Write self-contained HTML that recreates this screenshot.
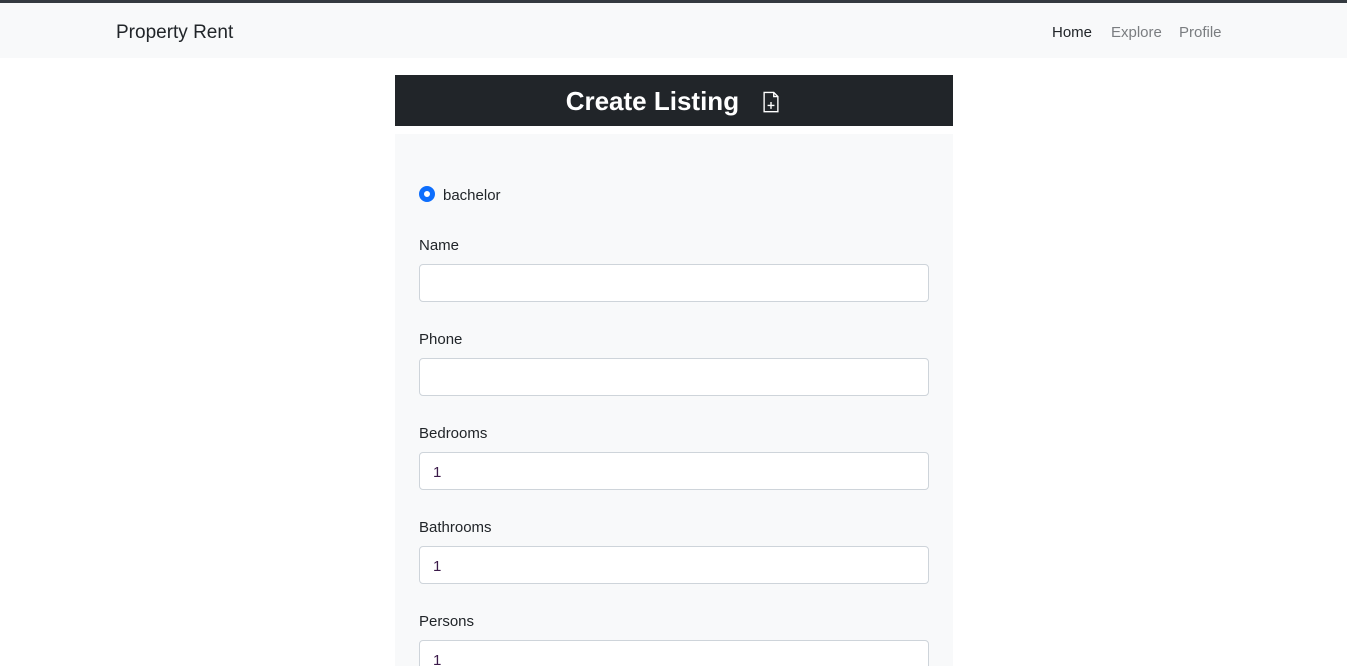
<!DOCTYPE html>
<html style="width:1347px;height:666px;overflow:hidden"><head><style>
*{box-sizing:border-box;margin:0;padding:0}
body{width:1347px;height:666px;overflow:hidden;background:#fff;font-family:"Liberation Sans",sans-serif;color:#212529;position:relative}
.top{position:absolute;left:0;top:0;width:1347px;height:3px;background:#343a40}
.nav{position:absolute;left:0;top:3px;width:1347px;height:55px;background:#f8f9fa}
.brand{position:absolute;left:116px;top:19px;font-size:19px;color:#212529}
.links{position:absolute;top:21px;font-size:15px}
.head{position:absolute;left:395px;top:75px;width:558px;height:51px;background:#212529;color:#fff;text-align:center;font-size:26px;font-weight:bold;line-height:53px}
.card{position:absolute;left:395px;top:134px;width:558px;height:532px;background:#f8f9fa}
.radio{position:absolute;left:419px;top:186px;width:16px;height:16px;border-radius:50%;border:5px solid #0d6efd;background:#fff}
.lbl{position:absolute;left:419px;font-size:15px}
.inp{position:absolute;left:419px;width:510px;height:38px;background:#fff;border:1px solid #ced4da;border-radius:4px;font-size:15px;padding:11px 13px;color:#3b1a4a}
</style></head><body>
<div class="top"></div>
<div class="nav"><div class="brand">Property Rent</div>
<div class="links" style="left:1052px;color:#212529">Home</div>
<div class="links" style="left:1111px;color:#7a7d80">Explore</div>
<div class="links" style="left:1179px;color:#7a7d80">Profile</div></div>
<div class="head">Create Listing <svg width="22" height="26" viewBox="0 0 16 16" style="vertical-align:-5px;margin-left:14px" fill="none" stroke="#fff" stroke-width="1"><path d="M3 1h7l3 3v11H3z M10 1v3h3 M8 8v5 M5.5 10.5h5"/></svg></div>
<div class="card"></div>
<div class="radio"></div>
<div class="lbl" style="left:443px;top:187px">bachelor</div>
<div class="lbl" style="top:237px">Name</div><div class="inp" style="top:264px"></div>
<div class="lbl" style="top:331px">Phone</div><div class="inp" style="top:358px"></div>
<div class="lbl" style="top:425px">Bedrooms</div><div class="inp" style="top:452px">1</div>
<div class="lbl" style="top:519px">Bathrooms</div><div class="inp" style="top:546px">1</div>
<div class="lbl" style="top:613px">Persons</div><div class="inp" style="top:640px">1</div>
</body></html>
